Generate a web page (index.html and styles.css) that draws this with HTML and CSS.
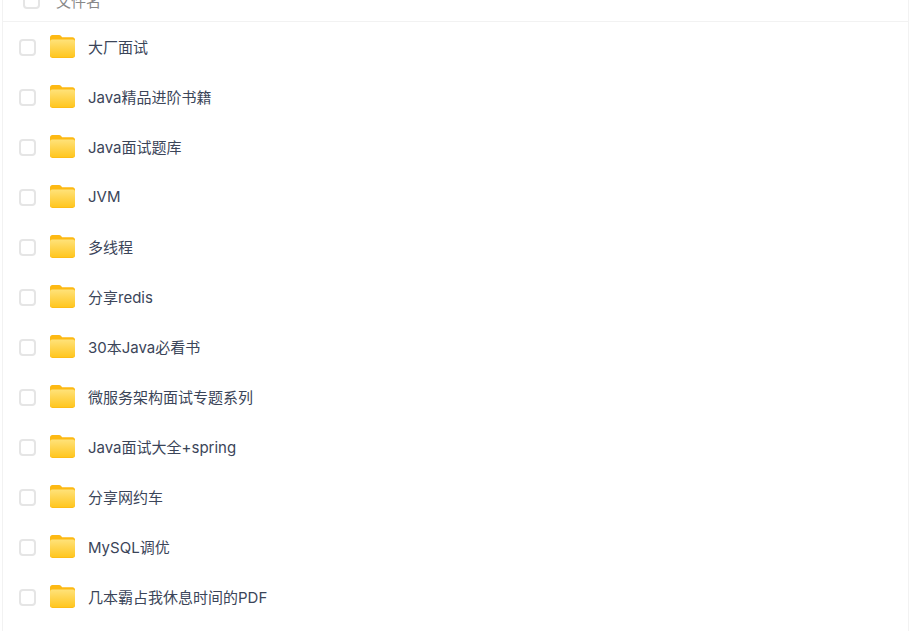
FILE: index.html
```html
<!DOCTYPE html>
<html lang="zh-CN">
<head>
    <meta charset="UTF-8">
    <title>文件列表</title>
    <link rel="stylesheet" href="styles.css">
</head>
<body>
    <div class="file-panel">
        <div class="list-head">
            <span class="check check-head"></span>
            <span class="head-name">文件名</span>
        </div>
        <ul class="file-list">
            <li class="file-row"><span class="check"></span><svg class="folder" viewBox="0 0 26 24"><use href="#folder-icon"/></svg><span class="file-name">大厂面试</span></li>
            <li class="file-row"><span class="check"></span><svg class="folder" viewBox="0 0 26 24"><use href="#folder-icon"/></svg><span class="file-name">Java精品进阶书籍</span></li>
            <li class="file-row"><span class="check"></span><svg class="folder" viewBox="0 0 26 24"><use href="#folder-icon"/></svg><span class="file-name">Java面试题库</span></li>
            <li class="file-row"><span class="check"></span><svg class="folder" viewBox="0 0 26 24"><use href="#folder-icon"/></svg><span class="file-name">JVM</span></li>
            <li class="file-row"><span class="check"></span><svg class="folder" viewBox="0 0 26 24"><use href="#folder-icon"/></svg><span class="file-name">多线程</span></li>
            <li class="file-row"><span class="check"></span><svg class="folder" viewBox="0 0 26 24"><use href="#folder-icon"/></svg><span class="file-name">分享redis</span></li>
            <li class="file-row"><span class="check"></span><svg class="folder" viewBox="0 0 26 24"><use href="#folder-icon"/></svg><span class="file-name">30本Java必看书</span></li>
            <li class="file-row"><span class="check"></span><svg class="folder" viewBox="0 0 26 24"><use href="#folder-icon"/></svg><span class="file-name">微服务架构面试专题系列</span></li>
            <li class="file-row"><span class="check"></span><svg class="folder" viewBox="0 0 26 24"><use href="#folder-icon"/></svg><span class="file-name">Java面试大全+spring</span></li>
            <li class="file-row"><span class="check"></span><svg class="folder" viewBox="0 0 26 24"><use href="#folder-icon"/></svg><span class="file-name">分享网约车</span></li>
            <li class="file-row"><span class="check"></span><svg class="folder" viewBox="0 0 26 24"><use href="#folder-icon"/></svg><span class="file-name">MySQL调优</span></li>
            <li class="file-row"><span class="check"></span><svg class="folder" viewBox="0 0 26 24"><use href="#folder-icon"/></svg><span class="file-name">几本霸占我休息时间的PDF</span></li>
        </ul>
    </div>

    <svg class="icon-defs" width="0" height="0">
        <defs>
            <linearGradient id="folder-front" x1="0" y1="0" x2="0" y2="1">
                <stop offset="0" stop-color="#ffe27a"/>
                <stop offset="1" stop-color="#ffc61f"/>
            </linearGradient>
            <symbol id="folder-icon" viewBox="0 0 26 24">
                <path d="M0 2.5C0 1.1 1 0 2.4 0h6.6c.9 0 1.5.3 2.1 1l1 1.2h10.4c1.4 0 2.5 1.1 2.5 2.5V8H0z" fill="#fdb913"/>
                <rect x="0" y="3.6" width="25" height="19.4" rx="2.4" fill="#fdb913"/>
                <rect x="0" y="4.4" width="25" height="17.8" rx="2.2" fill="url(#folder-front)"/>
            </symbol>
        </defs>
    </svg>
</body>
</html>
```

FILE: styles.css
```css
html, body {
    margin: 0;
    padding: 0;
    background: #fff;
}
body {
    height: 631px;
    overflow: hidden;
    font-family: "Inter", "Noto Sans CJK SC", sans-serif;
    color: #424e67;
}
.file-panel {
    width: 905px;
    height: 660px;
    margin-top: -21px;
    margin-left: 2px;
    border-left: 1px solid #f2f2f2;
    border-right: 1px solid #f2f2f2;
}
.list-head {
    display: flex;
    align-items: center;
    height: 43px;
    padding-left: 20px;
    border-bottom: 1px solid #f2f2f2;
    box-sizing: border-box;
}
.check {
    display: block;
    flex: none;
    width: 13px;
    height: 13px;
    border: 2px solid #e5e5e5;
    border-radius: 4px;
    background: #fff;
}
.head-name {
    margin-left: 16px;
    font-size: 15px;
    color: #888;
}
.file-list {
    list-style: none;
    margin: 0;
    padding: 0;
}
.file-row {
    display: flex;
    align-items: center;
    height: 50px;
    padding-left: 16px;
}
.folder {
    flex: none;
    width: 26px;
    height: 24px;
    margin-left: 14px;
}
.file-name {
    margin-left: 12px;
    padding-bottom: 2px;
    font-size: 15px;
    color: #3b4559;
}
.icon-defs {
    position: absolute;
}
```
